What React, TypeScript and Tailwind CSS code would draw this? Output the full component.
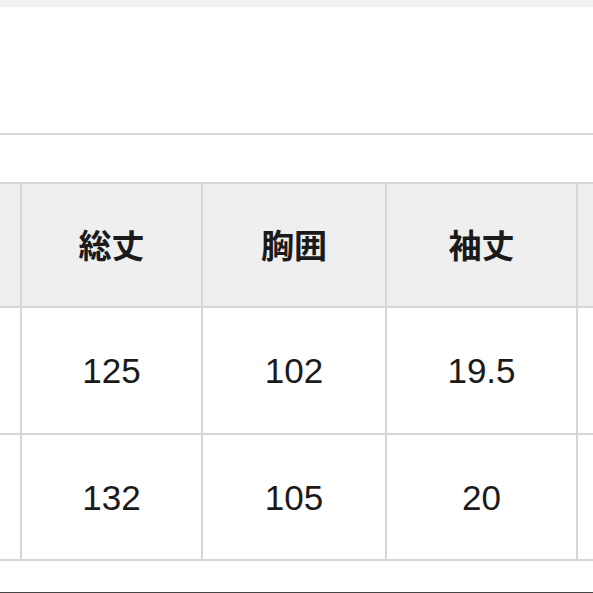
import React from "react";

const headers = ["総丈", "胸囲", "袖丈"];
const rows = [
  ["125", "102", "19.5"],
  ["132", "105", "20"],
];

export default function App() {
  return (
    <div className="w-[593px] h-[593px] overflow-hidden bg-white flex flex-col">
      <div className="h-[7px] bg-[#f2f2f2] shrink-0" />
      <div className="h-[126px] shrink-0" />
      <div className="h-[2px] bg-[#d9d9d9] shrink-0" />
      <div className="h-[47px] shrink-0" />
      <div className="grid grid-cols-[20px_179px_182px_189px_1fr] grid-rows-[122px_125px_124px] gap-[2px] bg-[#d6d6d6] border-y-2 border-[#d6d6d6] shrink-0">
        <div className="bg-[#efefef]" />
        {headers.map((h) => (
          <div
            key={h}
            className="bg-[#efefef] flex items-center justify-center text-[33px] font-bold text-[#1a1a1a] [font-family:'Noto_Sans_CJK_JP','Noto_Sans',sans-serif]"
          >
            {h}
          </div>
        ))}
        <div className="bg-[#efefef]" />
        {rows.map((r, i) => (
          <React.Fragment key={i}>
            <div className="bg-white" />
            {r.map((v, j) => (
              <div
                key={j}
                className="bg-white flex items-center justify-center pt-[2px] text-[35px] text-[#1a1a1a] [font-family:'Liberation_Sans',Arial,sans-serif]"
              >
                {v}
              </div>
            ))}
            <div className="bg-white" />
          </React.Fragment>
        ))}
      </div>
      <div className="flex-1" />
      <div className="h-[1px] bg-[#444444] shrink-0" />
    </div>
  );
}
